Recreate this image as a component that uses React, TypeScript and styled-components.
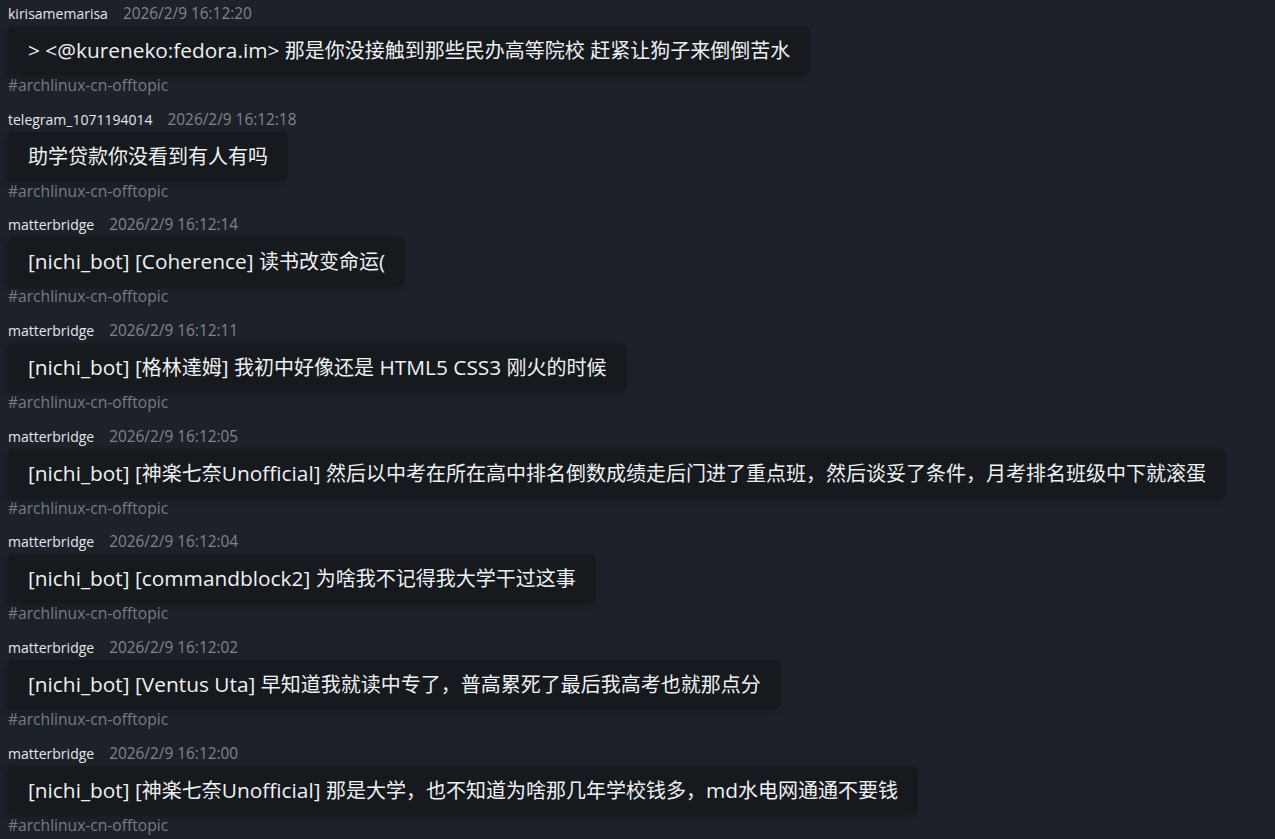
import React from "react";
import styled, { createGlobalStyle } from "styled-components";

const Global = createGlobalStyle`
  html, body { margin: 0; padding: 0; background: #1d2129; }
  body { font-family: "Open Sans", "Noto Sans CJK SC", sans-serif; }
`;

const Page = styled.div`
  min-height: 839px;
  background: #1d2129;
  padding: 4px 0 0 8px;
  box-sizing: border-box;
  overflow: hidden;
`;

const Message = styled.div`
  display: flex;
  flex-direction: column;
  align-items: flex-start;
  margin-bottom: 16.7px;
`;

const Header = styled.div`
  display: flex;
  align-items: baseline;
  gap: 15px;
  height: 20px;
  line-height: 20px;
  margin-bottom: 2px;
`;

const User = styled.span`
  color: #e4e6e9;
  font-size: 14px;
`;

const Time = styled.span`
  color: #80858c;
  font-size: 15.4px;
`;

const Bubble = styled.div`
  background: #16191e;
  color: #eef0f2;
  font-size: 20px;
  line-height: 29px;
  height: 49px;
  box-sizing: border-box;
  padding: 10px 20px;
  border-radius: 6px;
  white-space: nowrap;
  box-shadow: -3px 3px 6px rgba(0, 0, 0, 0.22);
`;

const Latin = styled.span`
  font-size: 20.85px;
`;

const Channel = styled.div`
  color: #777c83;
  font-size: 15.6px;
  line-height: 16px;
  height: 16px;
  margin-top: 2px;
`;

const messages = [
  { user: "kirisamemarisa", time: "2026/2/9 16:12:20", text: "> <@kureneko:fedora.im> 那是你没接触到那些民办高等院校 赶紧让狗子来倒倒苦水" },
  { user: "telegram_1071194014", time: "2026/2/9 16:12:18", text: "助学贷款你没看到有人有吗" },
  { user: "matterbridge", time: "2026/2/9 16:12:14", text: "[nichi_bot] [Coherence] 读书改变命运(" },
  { user: "matterbridge", time: "2026/2/9 16:12:11", text: "[nichi_bot] [格林達姆] 我初中好像还是 HTML5 CSS3 刚火的时候" },
  { user: "matterbridge", time: "2026/2/9 16:12:05", text: "[nichi_bot] [神楽七奈Unofficial] 然后以中考在所在高中排名倒数成绩走后门进了重点班，然后谈妥了条件，月考排名班级中下就滚蛋" },
  { user: "matterbridge", time: "2026/2/9 16:12:04", text: "[nichi_bot] [commandblock2] 为啥我不记得我大学干过这事" },
  { user: "matterbridge", time: "2026/2/9 16:12:02", text: "[nichi_bot] [Ventus Uta] 早知道我就读中专了，普高累死了最后我高考也就那点分" },
  { user: "matterbridge", time: "2026/2/9 16:12:00", text: "[nichi_bot] [神楽七奈Unofficial] 那是大学，也不知道为啥那几年学校钱多，md水电网通通不要钱" },
];

function renderText(text: string) {
  return text.split(/([\x20-\x7E]+)/).map((part, i) =>
    /^[\x20-\x7E]+$/.test(part) ? <Latin key={i}>{part}</Latin> : part
  );
}

export default function App() {
  return (
    <Page>
      <Global />
      {messages.map((m, i) => (
        <Message key={i}>
          <Header>
            <User>{m.user}</User>
            <Time>{m.time}</Time>
          </Header>
          <Bubble>{renderText(m.text)}</Bubble>
          <Channel>#archlinux-cn-offtopic</Channel>
        </Message>
      ))}
    </Page>
  );
}
